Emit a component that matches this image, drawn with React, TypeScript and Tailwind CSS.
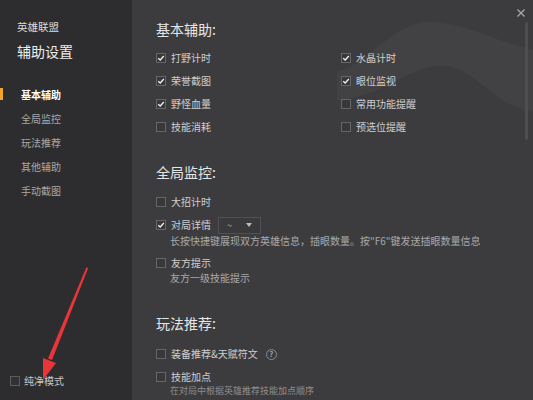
import React from 'react';

const font = { fontFamily: '"Noto Sans CJK SC", "Noto Sans", sans-serif' };

function Box({ checked }: { checked?: boolean }) {
    return (
        <span className="w-[10px] h-[10px] shrink-0 border border-[#66666a] bg-[#38383a] flex items-center justify-center">
            {checked && (
                <svg viewBox="0 0 10 10" className="w-[8px] h-[8px]">
                    <path d="M1.5 5.2 L4 7.5 L8.5 2.5" fill="none" stroke="#f2f2f2" strokeWidth="1.6" />
                </svg>
            )}
        </span>
    );
}

function Item({ label, checked, children }: { label: string; checked?: boolean; children?: React.ReactNode }) {
    return (
        <div className="h-4 flex items-center gap-[5px]">
            <Box checked={checked} />
            <span className="text-[10px] text-[#cfcfcf] leading-none">{label}</span>
            {children}
        </div>
    );
}

function Desc({ text }: { text: string }) {
    return <div className="pl-[14px] text-[10px] leading-4 text-[#a9a9a9] whitespace-nowrap">{text}</div>;
}

function Heading({ text }: { text: string }) {
    return <div className="h-5 text-[14px] leading-5 text-[#e6e6e6] mb-[11px]">{text}</div>;
}

export default function App() {
    const nav = ['全局监控', '玩法推荐', '其他辅助', '手动截图'];

    return (
        <div style={font} className="relative w-[533px] h-[400px] overflow-hidden flex bg-[#3c3c3e]">
            {/* Sidebar */}
            <aside className="relative w-[132px] shrink-0 bg-[#2d2d2f] flex flex-col">
                <div className="pl-[17px] pt-[19px] text-[10.5px] leading-4 text-[#dcdcdc]">英雄联盟</div>
                <div className="pl-[17px] pt-[6px] text-[14px] leading-5 text-[#ececec]">辅助设置</div>

                <div className="mt-[21px] flex flex-col">
                    <div className="relative h-6 flex items-center pl-[21px]">
                        <span className="absolute left-0 top-[6px] w-[3px] h-[12px] bg-[#f0a428]" />
                        <span className="text-[10px] font-bold text-white">基本辅助</span>
                    </div>
                    {nav.map((n) => (
                        <div key={n} className="h-6 flex items-center pl-[21px] text-[10px] text-[#a8a8a8]">
                            {n}
                        </div>
                    ))}
                </div>

                <div className="mt-auto mb-[12px] pl-[10px] flex items-center gap-[4px]">
                    <span className="w-[10px] h-[10px] border border-[#5c5c60] bg-[#323234]" />
                    <span className="text-[10px] text-[#c8c8c8]">纯净模式</span>
                </div>

                {/* red arrow annotation */}
                <svg className="absolute left-0 top-0" width="132" height="400">
                    <polygon points="86.5,267 88,268.5 52,360 48,358.5" fill="#e8353a" />
                    <polygon points="43,358 56,363 43,380" fill="#e8353a" />
                </svg>
            </aside>

            {/* Main */}
            <main className="relative flex-1 pl-6 pt-[19px]">
                {/* background wave */}
                <svg className="absolute left-0 top-0 pointer-events-none" width="401" height="130">
                    <path
                        d="M205,72 C240,62 262,20 300,22 C335,24 360,40 401,50 L401,112 C360,104 345,70 315,66 C280,62 255,96 205,100 Z"
                        fill="#ffffff"
                        fillOpacity="0.035"
                    />
                </svg>

                <div className="relative">
                    <Heading text="基本辅助:" />
                    <div className="grid grid-cols-[185px_1fr] gap-y-[7px]">
                        <Item label="打野计时" checked />
                        <Item label="水晶计时" checked />
                        <Item label="荣誉截图" checked />
                        <Item label="眼位监视" checked />
                        <Item label="野怪血量" checked />
                        <Item label="常用功能提醒" />
                        <Item label="技能消耗" />
                        <Item label="预选位提醒" />
                    </div>

                    <div className="mt-[27px]">
                        <Heading text="全局监控:" />
                        <div className="flex flex-col">
                            <div className="mt-[1px]">
                                <Item label="大招计时" />
                            </div>
                            <div className="mt-[7px]">
                                <Item label="对局详情" checked>
                                    <span className="ml-[2px] w-[43px] h-[17px] border border-[#505054] bg-[#3a3a3c] flex items-center justify-between px-[8px]">
                                        <span className="text-[9px] text-[#bbbbbb] leading-none">~</span>
                                        <svg viewBox="0 0 6 4" className="w-[6px] h-[4px]">
                                            <path d="M0 0 L6 0 L3 4 Z" fill="#bbbbbb" />
                                        </svg>
                                    </span>
                                </Item>
                            </div>
                            <Desc text={'长按快捷键展现双方英雄信息，插眼数量。按"F6"键发送插眼数量信息'} />
                            <div className="mt-[6px]">
                                <Item label="友方提示" />
                            </div>
                            <div className="-mt-[1px]">
                                <Desc text="友方一级技能提示" />
                            </div>
                        </div>
                    </div>

                    <div className="mt-[27px]">
                        <Heading text="玩法推荐:" />
                        <div className="flex flex-col">
                            <div className="mt-[2px]">
                                <Item label="装备推荐&天赋符文">
                                    <span className="ml-[3px] w-[11px] h-[11px] rounded-full border border-[#8a8a8e] text-[#9a9a9e] text-[8px] leading-none font-bold flex items-center justify-center">
                                        ?
                                    </span>
                                </Item>
                            </div>
                            <div className="mt-[7px]">
                                <Item label="技能加点" />
                            </div>
                            <div className="pl-[14px] text-[9px] leading-3 text-[#8e8e92] whitespace-nowrap">
                                在对局中根据英雄推荐技能加点顺序
                            </div>
                        </div>
                    </div>
                </div>

                {/* close */}
                <svg className="absolute right-[8px] top-[9px]" width="8" height="8" viewBox="0 0 8 8">
                    <path d="M0.5 0.5 L7.5 7.5 M7.5 0.5 L0.5 7.5" stroke="#a8a8ac" strokeWidth="1.3" />
                </svg>

                {/* scrollbar */}
                <div className="absolute right-[5px] top-[22px] w-[3px] h-[118px] rounded-full bg-[#4e4e51]" />
            </main>
        </div>
    );
}
